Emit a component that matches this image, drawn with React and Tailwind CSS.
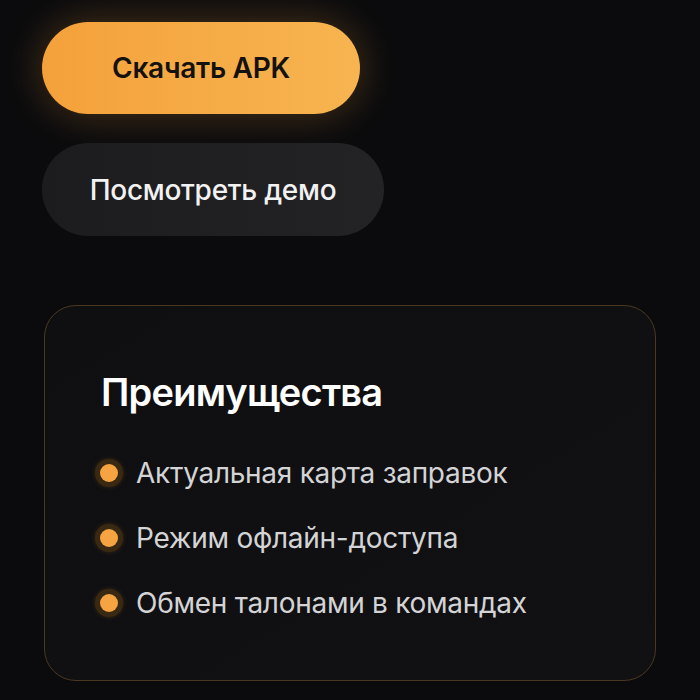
import React from 'react';

const features = [
  'Актуальная карта заправок',
  'Режим офлайн-доступа',
  'Обмен талонами в командах',
];

const App = () => {
  return (
    <div
      className="min-h-[700px] w-[700px] overflow-hidden bg-[#0b0b0d] pl-[42px] pt-[22px]"
      style={{ fontFamily: 'Inter, "Noto Sans", sans-serif' }}
    >
      <div className="flex flex-col items-start">
        <button
          type="button"
          className="flex h-[92px] w-[318px] items-center justify-center rounded-full bg-gradient-to-r from-[#f4a13a] to-[#f7b450] text-[28px] font-semibold tracking-[-0.01em] text-[#141210] shadow-[0_0_40px_rgba(245,160,60,0.28)]"
        >
          Скачать APK
        </button>
        <button
          type="button"
          className="mt-[29px] flex h-[93px] w-[342px] items-center justify-center rounded-full bg-gradient-to-r from-[#1c1c1e] to-[#232325] text-[28px] font-medium tracking-[-0.01em] text-[#f2f2f2]"
        >
          Посмотреть демо
        </button>
      </div>

      <div className="ml-[2px] mt-[69px] h-[376px] w-[612px] rounded-[32px] border border-[#4a3820] bg-gradient-to-br from-[#0f0f12] to-[#111114] pl-[56px] pt-[64px]">
        <h2 className="text-[38px] font-semibold leading-[44px] tracking-[-0.02em] text-white">
          Преимущества
        </h2>
        <ul className="mt-[43px] flex flex-col gap-[33px]">
          {features.map((item) => (
            <li key={item} className="flex items-center gap-[13px]">
              <span className="-ml-[6px] flex h-[28px] w-[28px] items-center justify-center rounded-full bg-[#3a2912] shadow-[0_0_4px_rgba(70,48,18,0.8)]">
                <span className="h-[18px] w-[18px] rounded-full bg-[#f6a442]" />
              </span>
              <span className="text-[28px] leading-[32px] tracking-[-0.01em] text-[#d4d4d6]">
                {item}
              </span>
            </li>
          ))}
        </ul>
      </div>
    </div>
  );
};

export default App;
